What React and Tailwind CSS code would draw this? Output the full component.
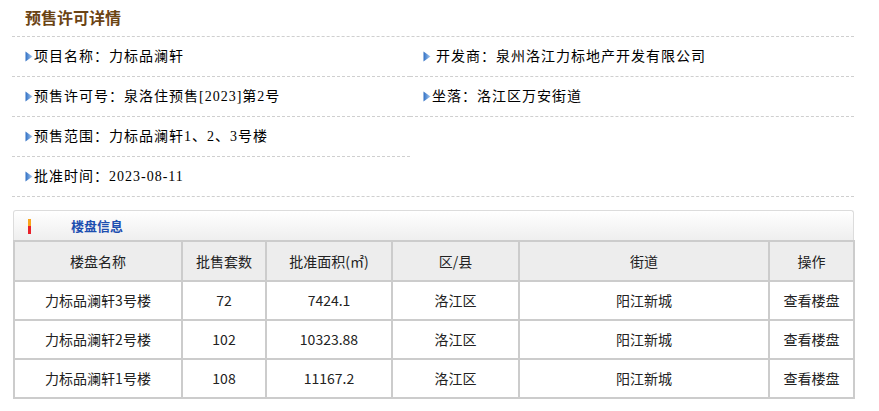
const info = [
  { label: '项目名称', value: '力标品澜轩' },
  { label: '开发商', value: '泉州洛江力标地产开发有限公司', gap: true },
  { label: '预售许可号', value: '泉洛住预售[2023]第2号' },
  { label: '坐落', value: '洛江区万安街道' },
  { label: '预售范围', value: '力标品澜轩1、2、3号楼' },
];

const rows = [
  { name: '力标品澜轩3号楼', count: '72', area: '7424.1', district: '洛江区', street: '阳江新城' },
  { name: '力标品澜轩2号楼', count: '102', area: '10323.88', district: '洛江区', street: '阳江新城' },
  { name: '力标品澜轩1号楼', count: '108', area: '11167.2', district: '洛江区', street: '阳江新城' },
];

function Arrow() {
  return (
    <svg width="8" height="11" viewBox="0 0 8 11" className="shrink-0">
      <defs>
        <linearGradient id="arr" x1="0" y1="0" x2="1" y2="0">
          <stop offset="0" stopColor="#2f6fc4" />
          <stop offset="1" stopColor="#a9cbf0" />
        </linearGradient>
      </defs>
      <path d="M0.5 0.5 L7.5 5.5 L0.5 10.5 Z" fill="url(#arr)" />
    </svg>
  );
}

function InfoItem({ label, value, gap }) {
  return (
    <div className="flex h-10 items-center border-b border-dashed border-[#cfcfcf] pl-[13px]">
      <Arrow />
      <span className={`${gap ? 'ml-[5px]' : 'ml-[1px]'} text-[14px] tracking-[1px] text-black`}>
        {label}：{value}
      </span>
    </div>
  );
}

export default function App() {
  return (
    <div className="w-[879px] bg-white pl-3 font-['Liberation_Serif','Noto_Sans_CJK_SC',serif]">
      <div className="w-[842px]">
        {/* ── Title ── */}
        <div className="flex h-[37px] items-center border-b border-dashed border-[#cfcfcf] pl-[13px] pb-[3px]">
          <h1 className="text-[16px] font-bold text-[#6b4414] font-['Noto_Sans_CJK_SC',sans-serif]">
            预售许可详情
          </h1>
        </div>

        {/* ── Info grid ── */}
        <div className="grid grid-cols-[398px_444px]">
          {info.map((it) => (
            <InfoItem key={it.label} {...it} />
          ))}
          <div />
          <div className="col-span-2">
            <InfoItem label="批准时间" value="2023-08-11" />
          </div>
        </div>

        {/* ── Building table ── */}
        <div className="mt-[13px] ml-px">
          <div className="flex h-[31px] items-center rounded-t-[3px] border border-b-0 border-[#dcdcdc] bg-gradient-to-b from-white to-[#eeeeee] pl-[14px]">
            <div className="flex h-[15px] w-[3px] flex-col">
              <div className="h-1/2 bg-[#f8a41c]" />
              <div className="h-1/2 bg-[#e8202a]" />
            </div>
            <span className="ml-[40px] text-[13px] font-bold text-[#1d4fb0] font-['Noto_Sans_CJK_SC',sans-serif]">
              楼盘信息
            </span>
          </div>
          <table className="w-[842px] border-separate border-spacing-[2px] bg-[#cccccc] text-center text-[14px] text-[#222] font-['Noto_Sans_CJK_SC',sans-serif] -mt-px">
            <thead>
              <tr className="h-[38px] bg-[#ededed]">
                <th className="w-[166px] font-normal">楼盘名称</th>
                <th className="w-[82px] font-normal">批售套数</th>
                <th className="w-[124px] font-normal">批准面积(㎡)</th>
                <th className="w-[125px] font-normal">区/县</th>
                <th className="w-[248px] font-normal">街道</th>
                <th className="font-normal">操作</th>
              </tr>
            </thead>
            <tbody>
              {rows.map((r) => (
                <tr key={r.name} className="h-[37px] bg-white">
                  <td>{r.name}</td>
                  <td>{r.count}</td>
                  <td>{r.area}</td>
                  <td>{r.district}</td>
                  <td>{r.street}</td>
                  <td>查看楼盘</td>
                </tr>
              ))}
            </tbody>
          </table>
        </div>
      </div>
    </div>
  );
}
